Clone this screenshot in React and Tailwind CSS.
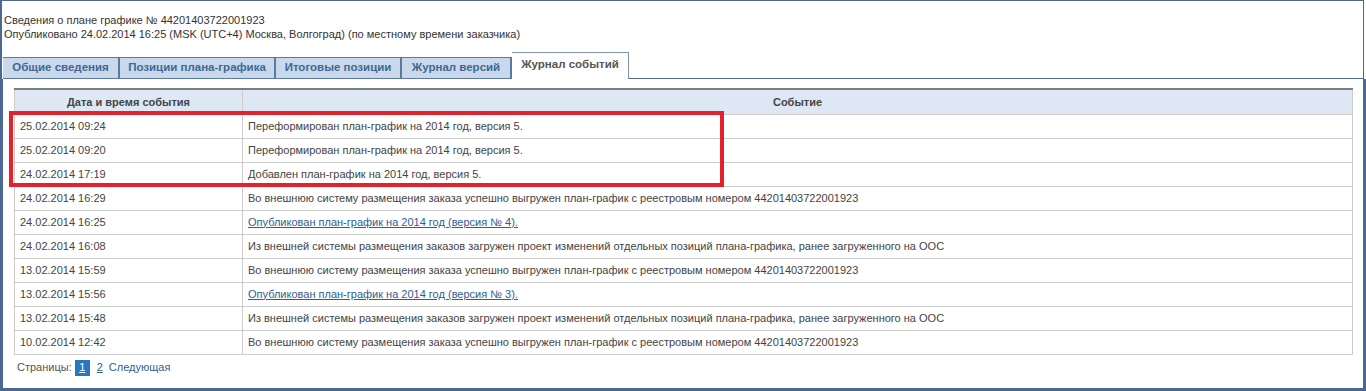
const rows = [
  ['25.02.2014 09:24', 'Переформирован план-график на 2014 год, версия 5.'],
  ['25.02.2014 09:20', 'Переформирован план-график на 2014 год, версия 5.'],
  ['24.02.2014 17:19', 'Добавлен план-график на 2014 год, версия 5.'],
  ['24.02.2014 16:29', 'Во внешнюю систему размещения заказа успешно выгружен план-график с реестровым номером 44201403722001923'],
  ['24.02.2014 16:25', 'Опубликован план-график на 2014 год (версия № 4).', true],
  ['24.02.2014 16:08', 'Из внешней системы размещения заказов загружен проект изменений отдельных позиций плана-графика, ранее загруженного на ООС'],
  ['13.02.2014 15:59', 'Во внешнюю систему размещения заказа успешно выгружен план-график с реестровым номером 44201403722001923'],
  ['13.02.2014 15:56', 'Опубликован план-график на 2014 год (версия № 3).', true],
  ['13.02.2014 15:48', 'Из внешней системы размещения заказов загружен проект изменений отдельных позиций плана-графика, ранее загруженного на ООС'],
  ['10.02.2014 12:42', 'Во внешнюю систему размещения заказа успешно выгружен план-график с реестровым номером 44201403722001923'],
];

const tabs = [
  ['Общие сведения', 'w-[117px]'],
  ['Позиции плана-графика', 'w-[156px]'],
  ['Итоговые позиции', 'w-[126px]'],
  ['Журнал версий', 'w-[110px]'],
];

export default function App() {
  return (
    <div className="relative w-[1366px] h-[391px] bg-white text-[11px] text-[#444] font-['Liberation_Sans',Arial,sans-serif] overflow-hidden">
      {/* шапка */}
      <div className="w-[1364px] h-[79px] border-t border-l-2 border-r border-[#4d6891] flex flex-col">
        <div className="pt-[12px] pl-[2px] leading-[14px] text-[#333]">
          <div>Сведения о плане графике № 44201403722001923</div>
          <div>Опубликовано 24.02.2014 16:25 (MSK (UTC+4) Москва, Волгоград) (по местному времени заказчика)</div>
        </div>
        <div className="mt-auto flex items-end pl-[1px]">
          {tabs.map(([t, w]) => (
            <div
              key={t}
              className={`${w} h-[22px] flex items-center justify-center bg-[#c9d9eb] border-r-2 border-t border-b border-[#5b7aa3] text-[11.5px] font-bold text-[#3e6795] whitespace-nowrap`}
            >
              {t}
            </div>
          ))}
          <div className="w-[117px] h-[27px] pb-[3px] flex items-center justify-center bg-white border-t border-r border-[#7f93ad] text-[11.5px] font-bold text-[#555] whitespace-nowrap">
            Журнал событий
          </div>
          <div className="flex-1 border-b border-[#4d6891]" />
        </div>
      </div>

      {/* содержимое */}
      <div className="h-[312px] border-l-[3px] border-r-[3px] border-b-[3px] border-[#4a6892] pt-[9px] pl-[11px] pr-[10px]">
        <table className="w-full border-collapse">
          <thead>
            <tr className="h-[25px] bg-[#dde8f4]">
              <th className="w-[228px] border-t-2 border-t-[#7d7d7d] border-x border-b border-[#cccccc] font-bold text-[#444] text-center">
                Дата и время события
              </th>
              <th className="border-t-2 border-t-[#7d7d7d] border-x border-b border-[#cccccc] font-bold text-[#444] text-center">
                Событие
              </th>
            </tr>
          </thead>
          <tbody>
            {rows.map(([d, e, link], i) => (
              <tr key={i} className="h-[24px]">
                <td className="border border-[#cccccc] pl-[5px] text-[#444] whitespace-nowrap">{d}</td>
                <td className="border border-[#cccccc] pl-[5px] text-[#444] whitespace-nowrap">
                  {link ? <a className="text-[#2e5e95] underline cursor-pointer">{e}</a> : e}
                </td>
              </tr>
            ))}
          </tbody>
        </table>

        <div className="flex items-center mt-[5px] pl-[3px] h-[16px]">
          <span className="text-[#555]">Страницы:</span>
          <span className="ml-[3px] w-[15px] h-[16px] bg-[#2a76c1] text-white underline flex items-center justify-center">1</span>
          <a className="ml-[7px] text-[#2e5e95] underline">2</a>
          <a className="ml-[6px] text-[#2e5e95]">Следующая</a>
        </div>
      </div>

      {/* выделение */}
      <div className="absolute left-[9px] top-[111px] w-[715px] h-[76px] border-4 border-[#e3222b] pointer-events-none" />
    </div>
  );
}
